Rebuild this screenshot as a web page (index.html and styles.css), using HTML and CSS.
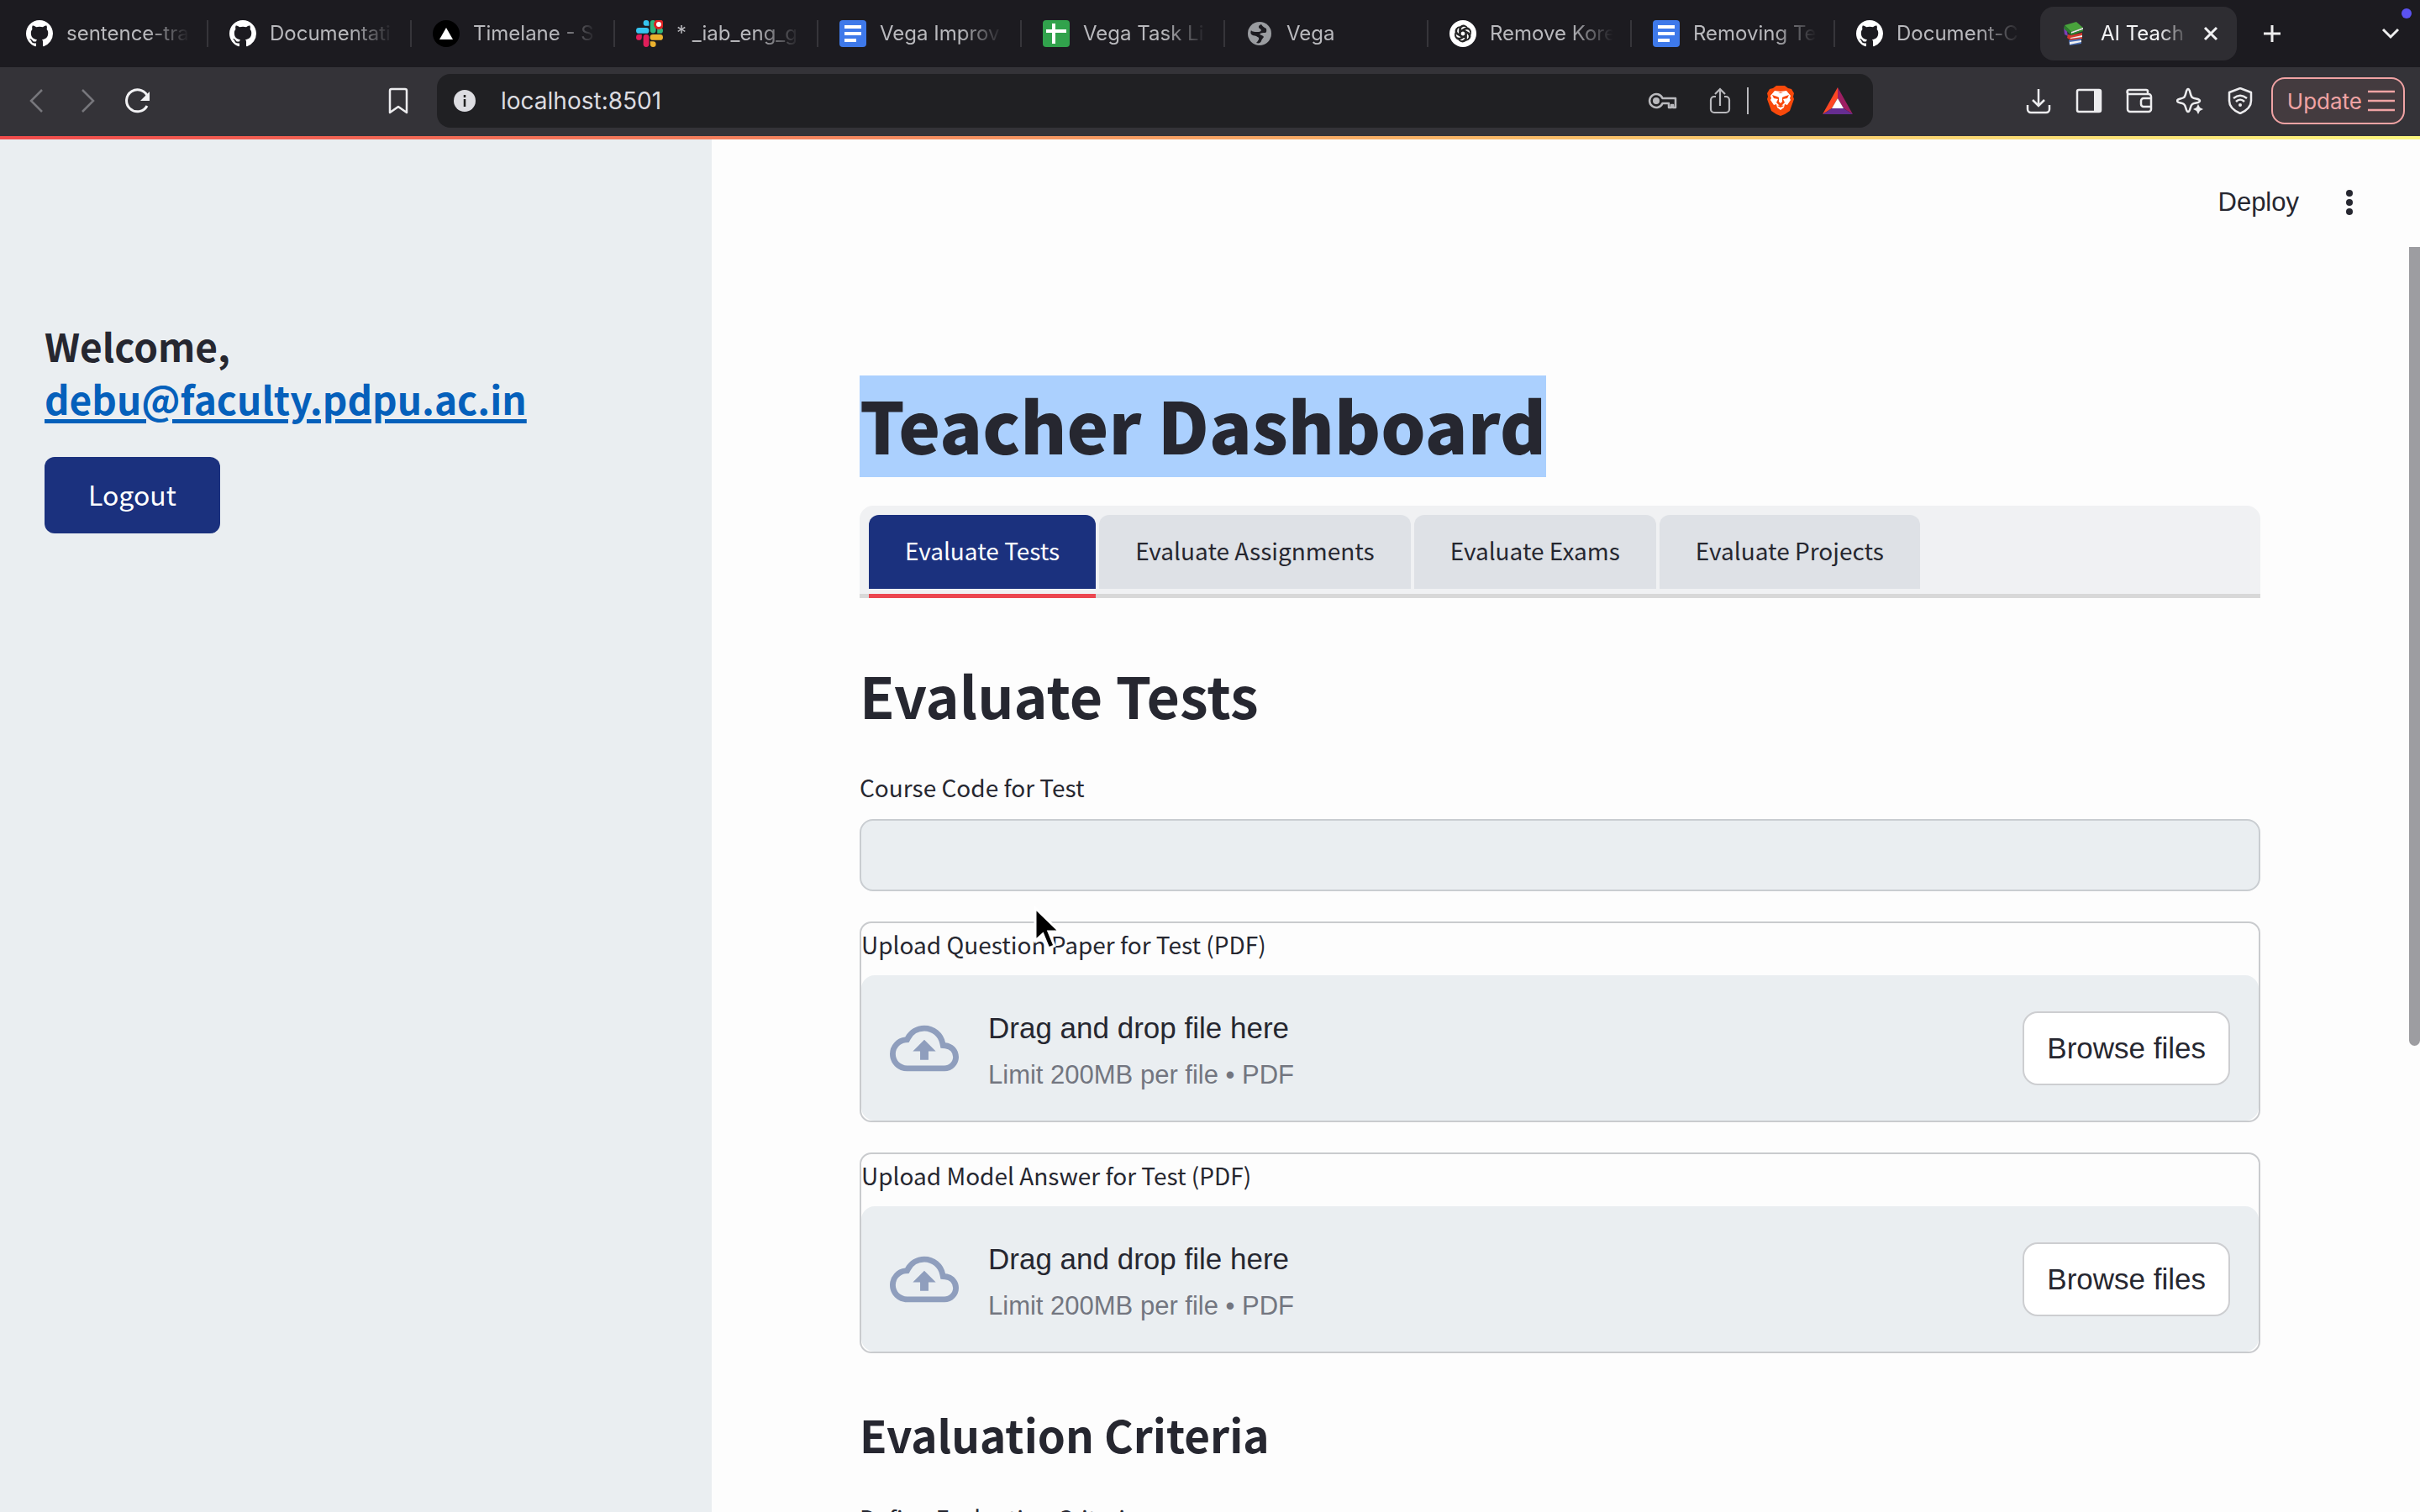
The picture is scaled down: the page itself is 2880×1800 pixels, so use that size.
FILE: index.html
```html
<!DOCTYPE html>
<html lang="en">
<head>
<meta charset="utf-8">
<title>AI Teach</title>
<link rel="stylesheet" href="styles.css">
</head>
<body>
<svg class="sprite" aria-hidden="true">
  <symbol id="github" viewBox="0 0 16 16"><path fill="#fff" d="M8 0C3.58 0 0 3.58 0 8c0 3.54 2.29 6.53 5.47 7.59.4.07.55-.17.55-.38 0-.19-.01-.82-.01-1.49-2.01.37-2.53-.49-2.69-.94-.09-.23-.48-.94-.82-1.13-.28-.15-.68-.52-.01-.53.63-.01 1.08.58 1.23.82.72 1.21 1.87.87 2.33.66.07-.52.28-.87.51-1.07-1.78-.2-3.64-.89-3.64-3.95 0-.87.31-1.59.82-2.15-.08-.2-.36-1.02.08-2.12 0 0 .67-.21 2.2.82.64-.18 1.32-.27 2-.27s1.36.09 2 .27c1.53-1.04 2.2-.82 2.2-.82.44 1.1.16 1.92.08 2.12.51.56.82 1.27.82 2.15 0 3.07-1.87 3.75-3.65 3.95.29.25.54.73.54 1.48 0 1.07-.01 1.93-.01 2.2 0 .21.15.46.55.38A8.01 8.01 0 0 0 16 8c0-4.42-3.58-8-8-8z"/></symbol>
  <symbol id="docs" viewBox="0 0 32 32"><rect width="32" height="32" rx="4" fill="#3e79ea"/><path fill="#fff" d="M6 6h20v4H6zM6 14h20v4H6zM6 22h14v4H6z"/></symbol>
  <symbol id="cloud" viewBox="0 0 24 24"><path fill="currentColor" d="M19.35 10.04A7.49 7.49 0 0 0 12 4C9.11 4 6.6 5.64 5.35 8.04A5.994 5.994 0 0 0 0 14c0 3.31 2.69 6 6 6h13c2.76 0 5-2.24 5-5 0-2.64-2.05-4.78-4.65-4.96zM19 18H6c-2.21 0-4-1.79-4-4 0-2.05 1.53-3.76 3.56-3.97l1.07-.11.5-.95A5.469 5.469 0 0 1 12 6c2.62 0 4.88 1.86 5.39 4.43l.3 1.5 1.53.11A2.98 2.98 0 0 1 22 15c0 1.65-1.35 3-3 3zM8 13h2.55v3h2.9v-3H16l-4-4z"/></symbol>
</svg>

<nav class="tabstrip" aria-label="Browser tabs">
  <a class="btab" href="#"><svg class="favicon"><use href="#github"/></svg><span class="btab-title">sentence-tra</span></a>
  <a class="btab" href="#"><svg class="favicon"><use href="#github"/></svg><span class="btab-title">Documentati</span></a>
  <a class="btab" href="#"><svg class="favicon" viewBox="0 0 32 32"><circle cx="16" cy="16" r="16" fill="#000"/><path fill="#fff" d="M16 9l8 14H8z"/></svg><span class="btab-title">Timelane - S</span></a>
  <a class="btab" href="#"><svg class="favicon" viewBox="0 0 32 32">
    <path fill="#36c5f0" d="M12 0a3.4 3.4 0 0 0 0 6.8h3.4V3.4A3.4 3.4 0 0 0 12 0zM3.4 9h8.6a3.4 3.4 0 0 1 0 6.8H3.4a3.4 3.4 0 0 1 0-6.8z"/>
    <path fill="#2eb67d" d="M16.8 3.4a3.4 3.4 0 0 1 6.8 0V12a3.4 3.4 0 0 1-6.8 0zM25.2 9h3.4a3.4 3.4 0 0 1 0 6.8h-3.4z"/>
    <path fill="#ecb22e" d="M20 17h8.6a3.4 3.4 0 0 1 0 6.8H20a3.4 3.4 0 0 1 0-6.8zM16.8 25.2H20a3.4 3.4 0 1 1-3.2 3.4z"/>
    <path fill="#e01e5a" d="M8.6 20.4a3.4 3.4 0 0 1 6.8 0v8.2a3.4 3.4 0 0 1-6.8 0zM0 20.4A3.4 3.4 0 0 1 3.4 17h3.4v3.4a3.4 3.4 0 0 1-6.8 0z"/>
    <circle cx="27" cy="5" r="6" fill="#d22"/><circle cx="27" cy="5" r="3" fill="#fff"/></svg><span class="btab-title">* _iab_eng_g</span></a>
  <a class="btab" href="#"><svg class="favicon"><use href="#docs"/></svg><span class="btab-title">Vega Improv</span></a>
  <a class="btab" href="#"><svg class="favicon" viewBox="0 0 32 32"><rect width="32" height="32" rx="4" fill="#31a24c"/><path fill="#fff" d="M11 4h4v7h13v4H15v13h-4V15H4v-4h7z"/></svg><span class="btab-title">Vega Task Li</span></a>
  <a class="btab" href="#"><svg class="favicon" viewBox="0 0 32 32"><circle cx="16" cy="16" r="14" fill="#9a9ca0"/><path fill="#1c1b20" d="M18 5c-3 1-4 3-2 5 3 1 2 4-1 4-4 0-8 0-9-2-2 5 1 6 6 7 1 1 4 1 3 4-1 2-2 3-3 4 3 1 5 0 6-2 0-2 2-3 3-5-1-2-3-2-5-3 1-2 4-2 7-2 2-1 1-4 1-5-2-1-4-2-6-5z"/></svg><span class="btab-title">Vega</span></a>
  <a class="btab" href="#"><svg class="favicon" viewBox="0 0 32 32"><circle cx="16" cy="16" r="16" fill="#fff"/><g fill="none" stroke="#222" stroke-width="1.5"><path id="petal" d="M13 19V11a4.5 4.5 0 0 1 8.5-1.5M13 13l6-3.5a4.5 4.5 0 0 1 6 5"/><use href="#petal" transform="rotate(60 16 16)"/><use href="#petal" transform="rotate(120 16 16)"/><use href="#petal" transform="rotate(180 16 16)"/><use href="#petal" transform="rotate(240 16 16)"/><use href="#petal" transform="rotate(300 16 16)"/></g></svg><span class="btab-title">Remove Kore</span></a>
  <a class="btab" href="#"><svg class="favicon"><use href="#docs"/></svg><span class="btab-title">Removing Te</span></a>
  <a class="btab last" href="#"><svg class="favicon"><use href="#github"/></svg><span class="btab-title">Document-C</span></a>
  <div class="btab active"><svg class="favicon" viewBox="0 0 32 32">
    <path fill="#7b3fb5" d="M4 9l3-1 2 11-4-2z"/><path fill="#49a33c" d="M5 6l14-4 8 7-14 5z"/><path fill="#2b7c2d" d="M5 6l8 8v4L4 10z"/><path fill="#e8e8e8" d="M13 14l14-5v2l-14 5z"/><path fill="#2f8a31" d="M13 16l14-5v2l-14 5z"/>
    <path fill="#d33a2f" d="M9 17l4 1 13-3v7l-14 2-4-3z"/><path fill="#eee" d="M12 21l14-3v2l-14 2z"/><path fill="#4b70b8" d="M10 24l15-2v6l-14 2z"/><path fill="#f1f1f1" d="M11 26l14-2v2l-14 3z"/></svg><span class="btab-title">AI Teach</span>
    <button class="icon-btn" aria-label="Close tab"><svg width="18" height="18" viewBox="0 0 18 18"><path d="M2 2l14 14M16 2L2 16" stroke="#f0f0f2" stroke-width="3"/></svg></button></div>
  <button class="icon-btn new-tab" aria-label="New tab"><svg width="24" height="24" viewBox="0 0 24 24"><path d="M12 2v20M2 12h20" stroke="#eee" stroke-width="3"/></svg></button>
  <button class="icon-btn tab-search" aria-label="Search tabs"><svg width="22" height="14" viewBox="0 0 22 14"><path d="M2 2l9 9 9-9" fill="none" stroke="#eee" stroke-width="3"/></svg><span class="dot"></span></button>
</nav>

<div class="toolbar">
  <div class="nav-buttons">
    <button class="icon-btn" aria-label="Back"><svg width="32" height="32" viewBox="0 0 32 32"><path d="M22 3L9 16l13 13" fill="none" stroke="#77777c" stroke-width="2.5"/></svg></button>
    <button class="icon-btn" aria-label="Forward"><svg width="32" height="32" viewBox="0 0 32 32"><path d="M10 3l13 13-13 13" fill="none" stroke="#77777c" stroke-width="2.5"/></svg></button>
    <button class="icon-btn" aria-label="Reload"><svg width="32" height="32" viewBox="0 0 32 32"><path d="M27 22A13 13 0 1 1 28 12" fill="none" stroke="#f2f2f4" stroke-width="3"/><path d="M30 5v11H19z" fill="#f2f2f4"/></svg></button>
  </div>
  <button class="icon-btn" aria-label="Bookmark"><svg width="32" height="32" viewBox="0 0 32 32"><path d="M6 4a2 2 0 0 1 2-2h16a2 2 0 0 1 2 2v26l-10-7-10 7z" fill="none" stroke="#ececee" stroke-width="2.5" stroke-linejoin="round"/></svg></button>
  <div class="address">
    <svg width="26" height="26" viewBox="0 0 26 26"><circle cx="13" cy="13" r="13" fill="#dddde2"/><path d="M13 11v9M13 6v3" stroke="#222" stroke-width="2.5"/></svg>
    <input class="url" type="text" aria-label="Address" value="localhost:8501">
    <div class="address-icons">
      <button class="icon-btn" aria-label="Passwords"><svg width="36" height="36" viewBox="0 0 36 36"><path d="M17.5 15a8 8 0 1 0 0 6H25v5h3v-3h2v3h3V15z" fill="none" stroke="#b9b9bd" stroke-width="2.5" stroke-linejoin="round"/><circle cx="10" cy="18" r="4" fill="#b9b9bd"/></svg></button>
      <button class="icon-btn" aria-label="Share"><svg width="36" height="36" viewBox="0 0 36 36"><path d="M13 13h-2a4 4 0 0 0-4 4v11a4 4 0 0 0 4 4h14a4 4 0 0 0 4-4V17a4 4 0 0 0-4-4h-2M18 24V4M12 10l6-6 6 6" fill="none" stroke="#b9b9bd" stroke-width="2.2"/></svg></button>
      <span class="bar"></span>
      <button class="icon-btn" aria-label="Brave Shields"><svg width="36" height="36" viewBox="0 0 36 36"><path fill="#f9490b" d="M9 3l4-3h10l4 3 4 1 3 5-1 4 1 3-5 14-6 4-5 2-5-2-6-4-5-14 1-3-1-4 3-5z"/><path fill="#fff" d="M11 6l7 1 7-1 5 6-1 3 1 2-4 6-3-1-1 4-4 3-4-3-1-4-3 1-4-6 1-2-1-3z"/><path fill="#f9490b" d="M8 11l6 2 2 1v5l2 2 2-2v-5l2-1 6-2-2 4-5 1 2 4-3 3-2 1-2-1-3-3 2-4-5-1zM14 24l4-1 4 1-4 2zM15 8h6l-3 1z"/></svg></button>
      <button class="icon-btn" aria-label="Rewards"><svg width="36" height="32" viewBox="0 0 36 32"><path fill="#ff4724" d="M18 0L0 32l11-7 7-12z"/><path fill="#9e1f63" d="M18 0l18 32-11-7-7-12z"/><path fill="#662d91" d="M0 32h36l-11-7H11z"/><path fill="#fff" d="M18 13l7 12H11z"/></svg></button>
    </div>
  </div>
  <div class="actions">
    <button class="icon-btn" aria-label="Downloads"><svg width="32" height="32" viewBox="0 0 32 32"><path d="M16 2v20M9 15l7 7 7-7M3 21v5a4 4 0 0 0 4 4h18a4 4 0 0 0 4-4v-5" fill="none" stroke="#ececee" stroke-width="2.5"/></svg></button>
    <button class="icon-btn" aria-label="Side panel"><svg width="32" height="32" viewBox="0 0 32 32"><rect x="2" y="3" width="28" height="26" rx="2" fill="none" stroke="#ececee" stroke-width="2.5"/><path d="M22 3h8v26h-8z" fill="#ececee"/></svg></button>
    <button class="icon-btn" aria-label="Wallet"><svg width="32" height="32" viewBox="0 0 32 32"><path d="M2 5v21a3 3 0 0 0 3 3h22a3 3 0 0 0 3-3V11a3 3 0 0 0-3-3H4a2 2 0 0 1 0-5h20a2 2 0 0 1 2 2v3M30 13h-9a3 3 0 0 0-3 3v4a3 3 0 0 0 3 3h9z" fill="none" stroke="#ececee" stroke-width="2.5"/></svg></button>
    <button class="icon-btn" aria-label="Leo AI"><svg width="32" height="32" viewBox="0 0 32 32"><path d="M14 2c3 0 2 8 5 10s9 1 9 4-6 2-9 4-2 9-5 9-2-7-5-9-8-1-8-4 5-2 8-4 2-10 5-10z" fill="none" stroke="#ececee" stroke-width="2.5"/><path d="M26 20l2 4 4 2-4 2-2 4-2-4-4-2 4-2z" fill="#ececee"/></svg></button>
    <button class="icon-btn" aria-label="VPN"><svg width="32" height="32" viewBox="0 0 32 32"><path d="M16 1l13 5v10c0 7-6 12-13 15C9 28 3 23 3 16V6z" fill="none" stroke="#ececee" stroke-width="2.5" stroke-linejoin="round"/><path d="M8 13c5-4 11-4 16 0M11 17c3-3 7-3 10 0" fill="none" stroke="#ececee" stroke-width="2.5"/><circle cx="16" cy="21" r="2" fill="#ececee"/></svg></button>
    <button class="update">Update <svg width="32" height="26" viewBox="0 0 32 26"><path d="M0 2h32M0 13h32M0 24h32" stroke="#f0a3a4" stroke-width="2.5"/></svg></button>
  </div>
</div>
<div class="progress"></div>

<div class="page">
  <aside class="sidebar">
    <h3 class="welcome">Welcome,<br><a href="mailto:debu@faculty.pdpu.ac.in">debu@faculty.pdpu.ac.in</a></h3>
    <button class="logout">Logout</button>
  </aside>
  <main class="main">
    <header class="app-header">
      <button class="deploy">Deploy</button>
      <button class="icon-btn" aria-label="Main menu"><svg width="36" height="36" viewBox="0 0 36 36" fill="#262730"><circle cx="18" cy="7" r="4"/><circle cx="18" cy="18" r="4"/><circle cx="18" cy="29" r="4"/></svg></button>
    </header>
    <div class="content">
      <h1><mark>Teacher Dashboard</mark></h1>
      <div class="tabs" role="tablist">
        <button class="tab selected" role="tab" aria-selected="true">Evaluate Tests</button>
        <button class="tab" role="tab">Evaluate Assignments</button>
        <button class="tab" role="tab">Evaluate Exams</button>
        <button class="tab" role="tab">Evaluate Projects</button>
      </div>
      <h2>Evaluate Tests</h2>
      <label class="label" for="course">Course Code for Test</label>
      <input class="field" id="course" type="text">
      <section class="uploader">
        <label class="label" for="question">Upload Question Paper for Test (PDF)</label>
        <div class="dropzone">
          <svg class="cloud"><use href="#cloud"/></svg>
          <div class="hint"><span>Drag and drop file here</span><small>Limit 200MB per file • PDF</small></div>
          <button class="browse" id="question">Browse files</button>
        </div>
      </section>
      <section class="uploader">
        <label class="label" for="answer">Upload Model Answer for Test (PDF)</label>
        <div class="dropzone">
          <svg class="cloud"><use href="#cloud"/></svg>
          <div class="hint"><span>Drag and drop file here</span><small>Limit 200MB per file • PDF</small></div>
          <button class="browse" id="answer">Browse files</button>
        </div>
      </section>
      <h3 class="criteria">Evaluation Criteria</h3>
      <label class="label" for="define">Define Evaluation Criteria</label>
      <textarea class="field" id="define"></textarea>
    </div>
    <div class="scrollbar"></div>
  </main>
</div>
<svg class="cursor" width="36" height="56" viewBox="0 0 36 56"><path d="M3 3v39l9-8 7 17 7-3-7-17h13z" fill="#000" stroke="#fff" stroke-width="3"/></svg>
</body>
</html>
```
FILE: styles.css
```css
* { box-sizing: border-box; }

body {
  margin: 0;
  height: 100vh;
  display: flex;
  flex-direction: column;
  overflow: hidden;
  background: #fdfdfd;
  color: #262730;
  font-family: "Noto Sans CJK SC", "Noto Sans", sans-serif;
}

button, input, textarea { font: inherit; color: inherit; margin: 0; }
button { border: 0; background: none; padding: 0; cursor: pointer; }
svg { display: block; flex: none; }
.sprite { display: none; }
.icon-btn { display: flex; align-items: center; justify-content: center; flex: none; }

/* Browser tab strip */
.tabstrip {
  flex: none;
  display: flex;
  align-items: center;
  height: 80px;
  padding: 0 24px 0 6px;
  background: #1c1b20;
  font-family: Inter, sans-serif;
  font-size: 24px;
}
.btab {
  flex: 0 1 242px;
  min-width: 0;
  display: flex;
  align-items: center;
  gap: 16px;
  height: 32px;
  padding: 0 20px 0 25px;
  border-right: 2px solid #36353a;
  color: #b9b9bd;
  text-decoration: none;
}
.btab.last { border-color: transparent; }
.favicon { width: 32px; height: 32px; }
.btab-title {
  flex: 1;
  min-width: 0;
  overflow: hidden;
  white-space: nowrap;
  line-height: 32px;
  -webkit-mask-image: linear-gradient(90deg, #000 65%, transparent);
  mask-image: linear-gradient(90deg, #000 65%, transparent);
}
.btab.active {
  flex-basis: 234px;
  height: 64px;
  margin-left: 2px;
  padding: 0 22px 0 24px;
  border: 0;
  border-radius: 16px;
  background: #2e2d32;
  color: #f4f4f6;
}
.new-tab { margin-left: 30px; }
.tab-search { position: relative; margin-left: auto; height: 64px; }
.dot {
  position: absolute;
  top: 2px;
  right: -14px;
  width: 12px;
  height: 12px;
  border-radius: 50%;
  background: #5b52f0;
}

/* Browser toolbar */
.toolbar {
  flex: none;
  display: flex;
  align-items: center;
  height: 82px;
  padding: 0 18px 2px 28px;
  background: #343338;
  font-family: Inter, sans-serif;
  font-size: 28px;
}
.nav-buttons { display: flex; gap: 28px; margin-right: 278px; }
.address {
  flex: 1;
  display: flex;
  align-items: center;
  height: 64px;
  margin-left: 30px;
  padding: 0 24px 0 20px;
  border-radius: 16px;
  background: #202023;
}
.url {
  flex: 1;
  min-width: 0;
  margin-left: 30px;
  padding: 0;
  border: 0;
  outline: 0;
  background: none;
  color: #dcdce0;
}
.address-icons { display: flex; align-items: center; gap: 32px; }
.bar { width: 2px; height: 32px; margin: 0 -12px 0 -18px; background: #b9b9bd; }
.actions { display: flex; align-items: center; gap: 28px; margin-left: 181px; }
.update {
  display: flex;
  align-items: center;
  gap: 7px;
  height: 56px;
  margin-left: -7px;
  padding: 0 10px 0 17px;
  border: 2px solid #f0a3a4;
  border-radius: 16px;
  background: #443b3f;
  color: #f0a3a4;
  font-size: 26px;
}
.progress {
  flex: none;
  height: 4px;
  background: linear-gradient(90deg, #f04b4b, #f4875f 35%, #f8bd68 65%, #fbf67e);
}

/* App */
.page { flex: 1; min-height: 0; display: flex; }
.sidebar { flex: 0 0 847px; padding: 214px 53px; background: #eaeef1; }
.welcome { margin: 0 0 38px; font-size: 46px; line-height: 63px; }
.welcome a { color: #0560bb; text-decoration-thickness: 5px; text-underline-offset: 5px; }
.logout {
  height: 91px;
  padding: 0 52px 4px;
  border-radius: 12px;
  background: #1b317e;
  color: #fff;
  font-size: 32px;
}

.main { flex: 1; min-width: 0; position: relative; overflow: hidden; }
.app-header {
  display: flex;
  justify-content: flex-end;
  align-items: center;
  gap: 42px;
  height: 150px;
  padding: 0 66px 0 0;
}
.deploy { font-family: "Liberation Sans", sans-serif; font-size: 31px; }
.content { display: flex; flex-direction: column; padding: 131px 190px 0 176px; }
h1 { margin: 0 0 34px; font-size: 84px; font-weight: 900; line-height: 115px; }
mark { display: block; width: fit-content; padding-bottom: 6px; background: #abd0fe; color: inherit; }
.tabs {
  display: flex;
  gap: 4px;
  height: 110px;
  padding: 11px 11px 0;
  border-bottom: 5px solid #d8d8d8;
  border-radius: 16px 16px 0 0;
  background: #f0f1f3;
}
.tab {
  position: relative;
  height: 88px;
  padding: 0 43px 4px;
  border-radius: 12px 12px 0 0;
  background: #dee1e6;
  font-size: 28px;
}
.tab.selected { background: #1b317e; color: #fff; }
.tab.selected::after {
  content: "";
  position: absolute;
  left: 0;
  right: 0;
  bottom: -11px;
  height: 5px;
  background: #ec4750;
}
h2 { margin: 67px 0 39px; font-size: 68px; line-height: 95px; }
.label { font-size: 28px; line-height: 48px; }
.field {
  width: 100%;
  height: 86px;
  margin-top: 14px;
  padding: 0 24px;
  border: 2px solid #c9cdd1;
  border-radius: 16px;
  outline: 0;
  background: #eaeef1;
}
.uploader {
  display: flex;
  flex-direction: column;
  margin-top: 36px;
  border: 2px solid #c9cbce;
  border-radius: 14px;
}
.uploader .label { height: 62px; line-height: 50px; }
.dropzone {
  display: flex;
  align-items: center;
  height: 173px;
  padding: 0 34px;
  border-radius: 16px;
  background: #eaeef1;
  font-family: "Liberation Sans", sans-serif;
}
.cloud { width: 82px; height: 82px; color: #8f9ebd; }
.hint { flex: 1; display: flex; flex-direction: column; margin-left: 35px; padding-top: 8px; font-size: 35px; line-height: 56px; }
.hint small { font-size: 31px; color: #737680; }
.browse {
  height: 88px;
  padding: 0 27px;
  border: 2px solid #cdced1;
  border-radius: 18px;
  background: #fff;
  font-size: 35px;
}
.criteria { margin: 60px 0 40px; font-size: 53px; line-height: 72px; }

.scrollbar {
  position: absolute;
  top: 128px;
  right: 0;
  width: 13px;
  height: 951px;
  border-radius: 0 0 7px 7px;
  background: #9d9da1;
}
.cursor { position: absolute; left: 1229px; top: 1078px; }
```
